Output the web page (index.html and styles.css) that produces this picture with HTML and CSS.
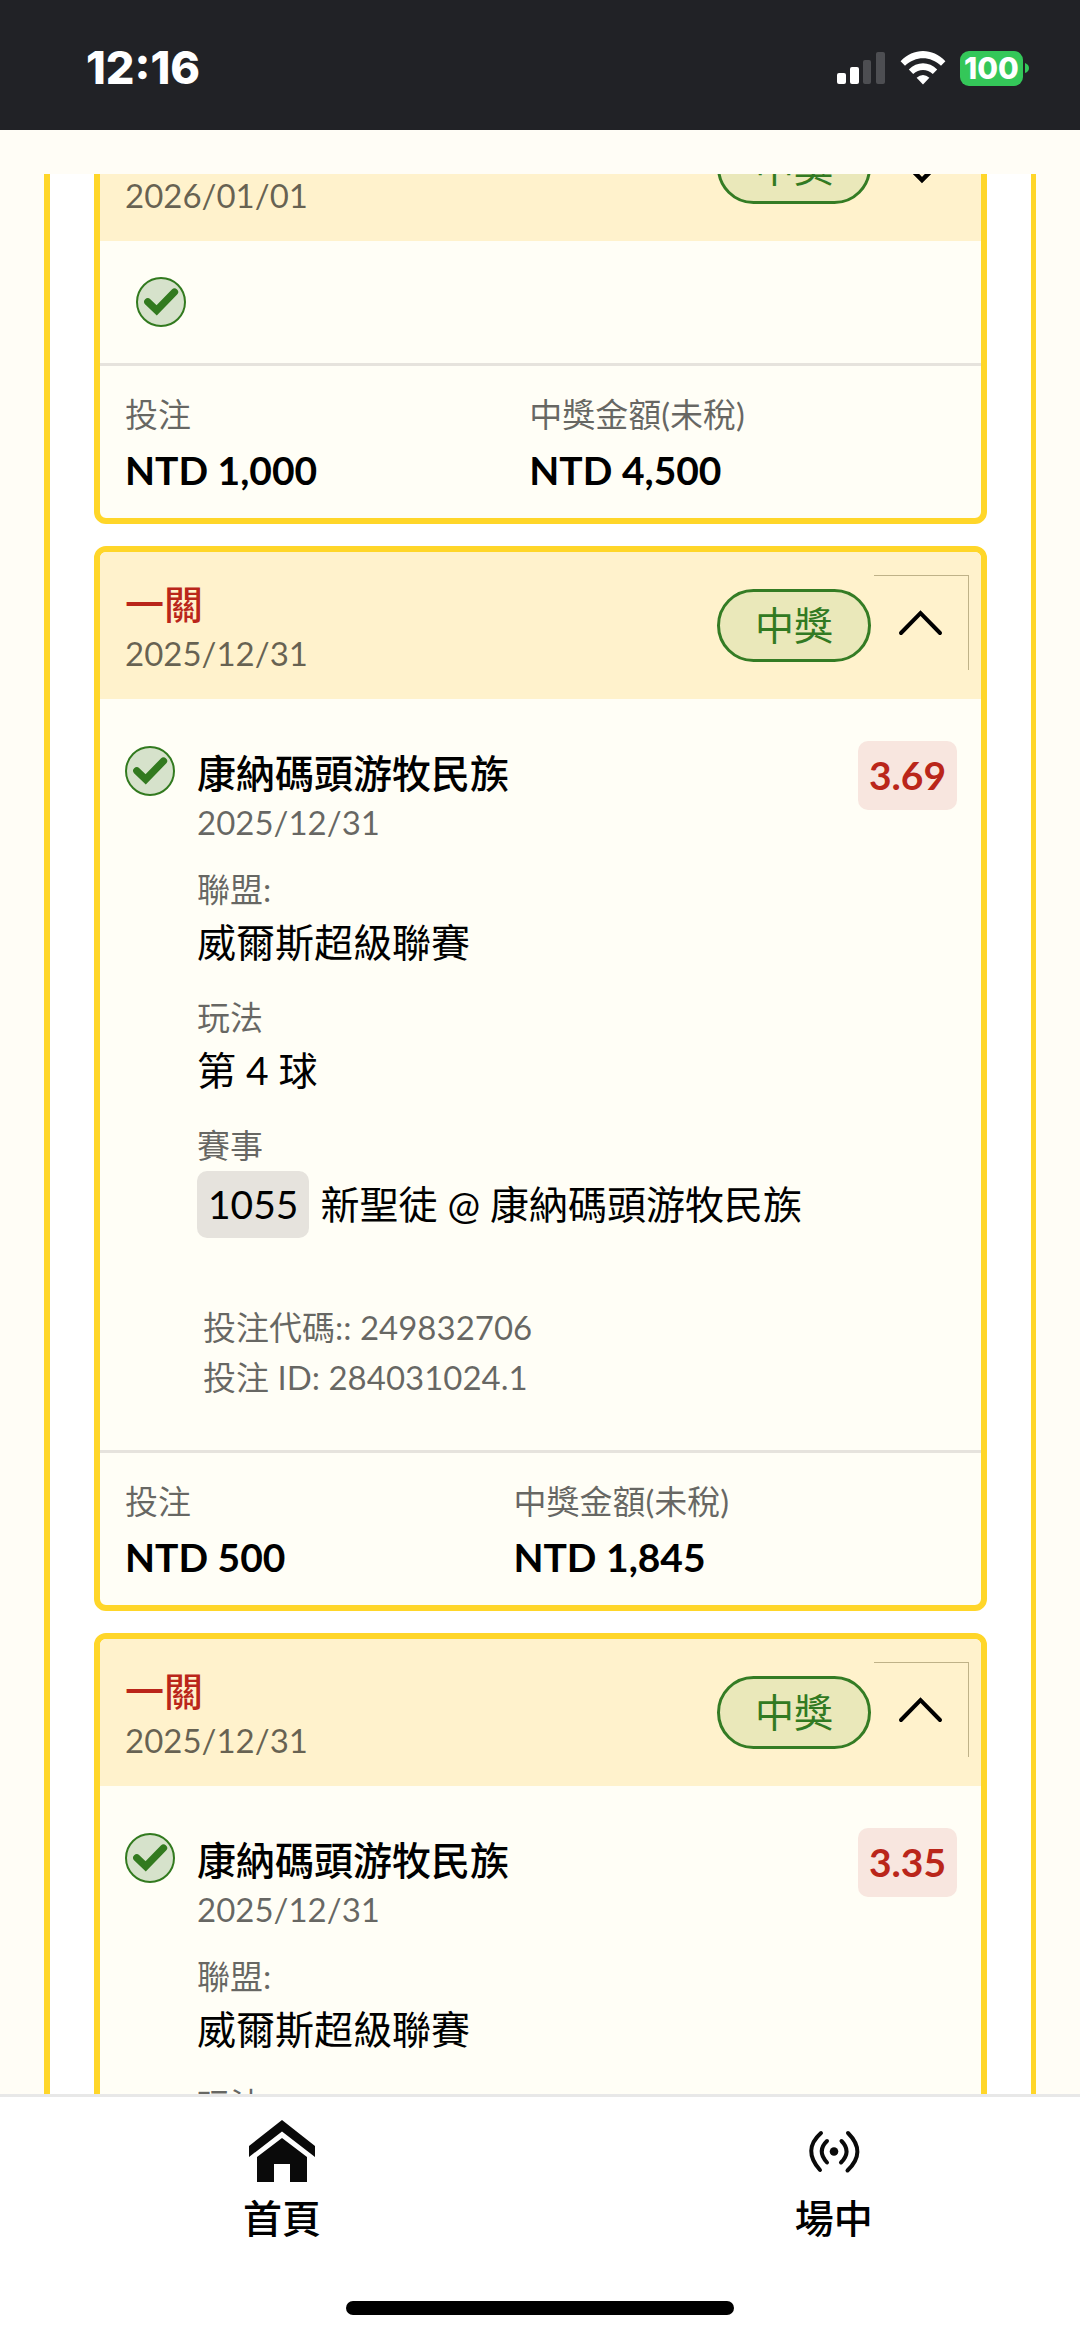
FILE: index.html
```html
<!DOCTYPE html>
<html lang="zh-Hant">
<head>
<meta charset="utf-8">
<meta name="viewport" content="width=device-width, initial-scale=1">
<title>投注紀錄</title>
<link rel="stylesheet" href="styles.css">
</head>
<body>
<svg class="sprite" aria-hidden="true">
  <symbol id="tick" viewBox="0 0 50 50">
    <circle cx="25" cy="25" r="24" fill="#d6e2cb" stroke="#327a1f" stroke-width="2"/>
    <path d="M11.800 24.800 20.700 33.400 38.500 15" fill="none" stroke="#327a1f" stroke-width="7.300" stroke-linecap="round"/>
  </symbol>
  <symbol id="up" viewBox="0 0 48 48">
    <path d="M4 34 23.500 14 43 34" fill="none" stroke="#000" stroke-width="4" stroke-linecap="round"/>
  </symbol>
  <symbol id="down" viewBox="0 0 48 48">
    <path d="M4 16 24 36 44 16" fill="none" stroke="#000" stroke-width="4.500" stroke-linecap="round"/>
  </symbol>
</svg>

<header class="status">
  <time class="clock">12:16</time>
  <div class="status-icons">
    <svg class="signal" width="48" height="32" viewBox="0 0 48 32" aria-hidden="true">
      <rect x="0" y="21" width="9" height="11" rx="2" fill="#fff"/>
      <rect x="13" y="15" width="9" height="17" rx="2" fill="#fff"/>
      <rect x="26" y="8" width="8" height="24" rx="2" fill="#4d4e52"/>
      <rect x="39" y="0" width="9" height="32" rx="2" fill="#4d4e52"/>
    </svg>
    <svg class="wifi" width="46" height="34" viewBox="0 0 46 34" aria-hidden="true">
      <path d="M.6 10.200C13.500-3.300 32.500-3.300 45.400 10.200L41 14.800C30.500 4.800 15.500 4.800 5 14.800Z" fill="#fff"/>
      <path d="M8.800 18.400C17 10.200 29 10.200 37.200 18.400L32.800 23C27 17.500 19 17.500 13.200 23Z" fill="#fff"/>
      <path d="M16.600 26.700Q23 21.300 29.400 26.700L23 33.500Z" fill="#fff"/>
    </svg>
    <span class="battery">100</span>
    <svg class="nub" width="4" height="10" viewBox="0 0 4 10" aria-hidden="true"><path d="M0 0Q4 1.500 4 5T0 10Z" fill="#34c759"/></svg>
  </div>
</header>

<main class="view">
  <div class="panel">
    <article class="card">
      <header class="card-head">
        <div class="card-name">
          <h2 class="title red">一關</h2>
          <p class="date">2026/01/01</p>
        </div>
        <span class="pill">中獎</span>
        <button class="toggle" type="button" aria-label="展開" aria-expanded="false"><svg class="chevron"><use href="#down"/></svg></button>
      </header>
      <div class="brief"><svg class="tick"><use href="#tick"/></svg></div>
      <dl class="totals">
        <div class="total"><dt>投注</dt><dd>NTD 1,000</dd></div>
        <div class="total"><dt>中獎金額(未稅)</dt><dd>NTD 4,500</dd></div>
      </dl>
    </article>

    <article class="card">
      <header class="card-head">
        <div class="card-name">
          <h2 class="title red">一關</h2>
          <p class="date">2025/12/31</p>
        </div>
        <span class="pill">中獎</span>
        <button class="toggle open" type="button" aria-label="收合" aria-expanded="true"><svg class="chevron"><use href="#up"/></svg></button>
      </header>
      <div class="detail">
        <svg class="tick"><use href="#tick"/></svg>
        <div class="bet">
          <h3 class="title">康納碼頭游牧民族</h3>
          <p class="date">2025/12/31</p>
          <dl class="facts">
            <div><dt>聯盟:</dt><dd>威爾斯超級聯賽</dd></div>
            <div><dt>玩法</dt><dd>第 4 球</dd></div>
            <div><dt>賽事</dt><dd class="match"><span class="code">1055</span><span>新聖徒 @ 康納碼頭游牧民族</span></dd></div>
          </dl>
          <div class="ids">
            <p>投注代碼:: 249832706</p>
            <p>投注 ID: 284031024.1</p>
          </div>
        </div>
        <span class="odds">3.69</span>
      </div>
      <dl class="totals">
        <div class="total"><dt>投注</dt><dd>NTD 500</dd></div>
        <div class="total"><dt>中獎金額(未稅)</dt><dd>NTD 1,845</dd></div>
      </dl>
    </article>

    <article class="card">
      <header class="card-head">
        <div class="card-name">
          <h2 class="title red">一關</h2>
          <p class="date">2025/12/31</p>
        </div>
        <span class="pill">中獎</span>
        <button class="toggle open" type="button" aria-label="收合" aria-expanded="true"><svg class="chevron"><use href="#up"/></svg></button>
      </header>
      <div class="detail">
        <svg class="tick"><use href="#tick"/></svg>
        <div class="bet">
          <h3 class="title">康納碼頭游牧民族</h3>
          <p class="date">2025/12/31</p>
          <dl class="facts">
            <div><dt>聯盟:</dt><dd>威爾斯超級聯賽</dd></div>
            <div><dt>玩法</dt></div>
          </dl>
        </div>
        <span class="odds">3.35</span>
      </div>
    </article>
  </div>
</main>

<footer class="dock">
  <nav class="tabs">
    <a class="tab" href="#home">
      <svg width="66" height="62" viewBox="0 0 66 62" aria-hidden="true" fill="#0a0a0a">
        <path d="M33 0 66 26V37L33 11.500 0 37V26Z"/>
        <path d="M33 18 58 37V62H41V44H25V62H8V37Z"/>
      </svg>
      首頁
    </a>
    <a class="tab" href="#live">
      <svg width="66" height="62" viewBox="2 0 66 62" aria-hidden="true" fill="none" stroke="#0a0a0a" stroke-width="4" stroke-linecap="round">
        <circle cx="35" cy="31.500" r="4.300" fill="#0a0a0a" stroke="none"/>
        <path d="M28 21Q17.500 31 28 42.500M42.500 21Q53 31.500 42 42.500M22 13Q3 30 21 50M49 13Q68 32 48.500 50.500"/>
      </svg>
      場中
    </a>
  </nav>
  <div class="home-bar"></div>
</footer>
</body>
</html>
```

FILE: styles.css
```css
* {
  box-sizing: border-box;
  margin: 0;
  padding: 0;
}

body {
  display: flex;
  flex-direction: column;
  height: 100vh;
  overflow: hidden;
  background: #fffdf6;
  color: #000;
  font-family: Lato, "Noto Sans CJK TC", sans-serif;
  font-size: 39px;
}

.sprite {
  display: none;
}

/* Status bar */
.status {
  display: flex;
  flex: none;
  align-items: center;
  justify-content: space-between;
  height: 130px;
  padding: 6px 51px 0 86px;
  background: #212226;
  color: #fff;
  font-family: Inter, sans-serif;
  font-weight: 800;
}

.clock {
  font-size: 45px;
  line-height: 54px;
}

.status-icons {
  display: flex;
  align-items: center;
}

.wifi {
  margin: 0 14px 0 15px;
}

.battery {
  width: 63px;
  height: 35px;
  border-radius: 9px;
  background: #34c759;
  font-size: 30px;
  line-height: 35px;
  text-align: center;
}

.nub {
  margin-left: 2px;
}

/* Scrolling list */
.view {
  flex: 1;
  min-height: 0;
  margin-top: 44px;
  padding: 0 44px;
  overflow: hidden;
}

.panel {
  display: flex;
  flex-direction: column;
  gap: 22px;
  margin-top: -86px;
  padding: 0 44px;
  border: solid #ffd629;
  border-width: 0 5px 0 6px;
  background: #fff;
}

.card {
  overflow: hidden;
  border: 6px solid #ffd629;
  border-radius: 12px;
  background: #fffef6;
}

.card-head {
  display: flex;
  align-items: center;
  padding-right: 12px;
  background: #fff2cc;
}

.card-name {
  flex: 1;
  padding: 27px 0 20px 25px;
}

.title {
  font-size: 39px;
  font-weight: 500;
  line-height: 50px;
}

.red {
  color: #ba261a;
}

.date {
  padding-bottom: 1px;
  color: rgba(0, 0, 0, 0.6);
  font-size: 33px;
  line-height: 49px;
}

.pill {
  padding: 0 35px;
  border: 3px solid #347c24;
  border-radius: 37px;
  background: #eae8ba;
  color: #327a22;
  line-height: 67px;
}

.toggle {
  width: 95px;
  height: 95px;
  margin-left: 3px;
  border: 0;
  background: none;
}

.open {
  align-self: flex-start;
  margin-top: 23px;
  border: solid #bfb288;
  border-width: 1px 1px 0 0;
}

.chevron {
  width: 48px;
  height: 48px;
  vertical-align: middle;
}

.tick {
  flex: none;
  width: 50px;
  height: 50px;
}

.brief {
  display: flex;
  padding: 36px;
}

.detail {
  display: flex;
  align-items: flex-start;
  padding: 42px 24px 48px 25px;
}

.detail .tick {
  margin-top: 5px;
}

.bet {
  flex: 1;
  margin-top: 7px;
  padding-left: 22px;
}

.facts {
  display: grid;
  gap: 22px;
  margin-top: 15px;
}

dt {
  color: rgba(0, 0, 0, 0.6);
  font-size: 33px;
  line-height: 52px;
}

dd {
  line-height: 54px;
}

.match {
  display: flex;
  gap: 11px;
  line-height: 67px;
}

.code {
  padding: 0 11px;
  border-radius: 10px;
  background: #e6e3dd;
}

.ids {
  margin-top: 64px;
  padding-left: 6px;
  color: rgba(0, 0, 0, 0.6);
  font-size: 33px;
  line-height: 50px;
}

.odds {
  padding: 0 11px;
  border-radius: 10px;
  background: #f8e6df;
  color: #ba261a;
  font-weight: 700;
  line-height: 69px;
}

.totals {
  display: flex;
  padding: 22px 24px 18px 25px;
  border-top: 3px solid #e6e3dd;
}

.total {
  flex: 1 1 auto;
}

.total dd {
  font-weight: 700;
  line-height: 60px;
}

/* Bottom navigation */
.dock {
  flex: none;
  padding-bottom: 22px;
  border-top: 3px solid #e8e8e8;
  background: #fff;
}

.tabs {
  display: flex;
  justify-content: space-between;
  padding: 23px 19.2% 54px 22.5%;
}

.tab {
  display: flex;
  flex-direction: column;
  align-items: center;
  gap: 8px;
  color: #000;
  font-weight: 500;
  line-height: 57px;
  text-decoration: none;
}

.home-bar {
  width: 36%;
  height: 14px;
  margin: 0 auto;
  border-radius: 7px;
  background: #000;
}
```
